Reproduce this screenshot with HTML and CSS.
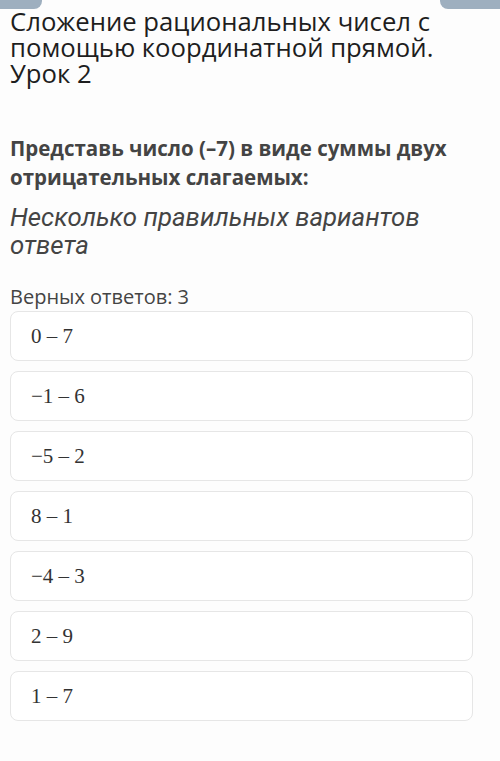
FILE: index.html
```html
<!DOCTYPE html>
<html lang="ru">
<head>
<meta charset="utf-8">
<link rel="stylesheet" href="styles.css">
</head>
<body>
<div class="tabs"><span class="tab tab-left"></span><span class="tab tab-right"></span></div>
<main class="page">
  <h1 class="title">Сложение рациональных чисел с помощью координатной прямой. Урок 2</h1>
  <p class="question">Представь число (–7) в виде суммы двух отрицательных слагаемых:</p>
  <p class="mode">Несколько правильных вариантов ответа</p>
  <p class="count">Верных ответов: 3</p>
  <ul class="options">
    <li class="option">0 – 7</li>
    <li class="option">−1 – 6</li>
    <li class="option">−5 – 2</li>
    <li class="option">8 – 1</li>
    <li class="option">−4 – 3</li>
    <li class="option">2 – 9</li>
    <li class="option">1 – 7</li>
  </ul>
</main>
</body>
</html>
```
FILE: styles.css
```css
html, body { margin: 0; padding: 0; background: #fdfdfd; }
body { font-family: "Open Sans", sans-serif; color: #222; }
.tabs { display: flex; justify-content: space-between; height: 9px; }
.tab { display: block; height: 9px; background: #9eafbf; }
.tab-left { width: 42px; border-radius: 0 0 8px 0; }
.tab-right { width: 60px; border-radius: 0 0 0 8px; }
.page { padding: 0 10px; }
.title { margin: 0; font-size: 25.7px; font-weight: 400; line-height: 26px; color: #1e1e1e; }
.question { margin: 47px 0 0; font-size: 20.5px; font-weight: 700; line-height: 29px; color: #444; }
.mode { margin: 11px 0 0; font-family: Roboto, sans-serif; font-size: 25.8px; font-style: italic; line-height: 28px; color: #444; }
.count { margin: 25px 0 0; font-size: 20px; line-height: 26px; color: #444; }
.options { list-style: none; margin: 1px 0 0; padding: 0; display: flex; flex-direction: column; gap: 10px; width: 463px; }
.option { box-sizing: border-box; height: 50px; border: 1px solid #e6e6e6; border-radius: 8px; background: #fff; padding: 0 0 0 20px; display: flex; align-items: center; font-family: "Liberation Serif", serif; font-size: 21px; color: #333; }
```
